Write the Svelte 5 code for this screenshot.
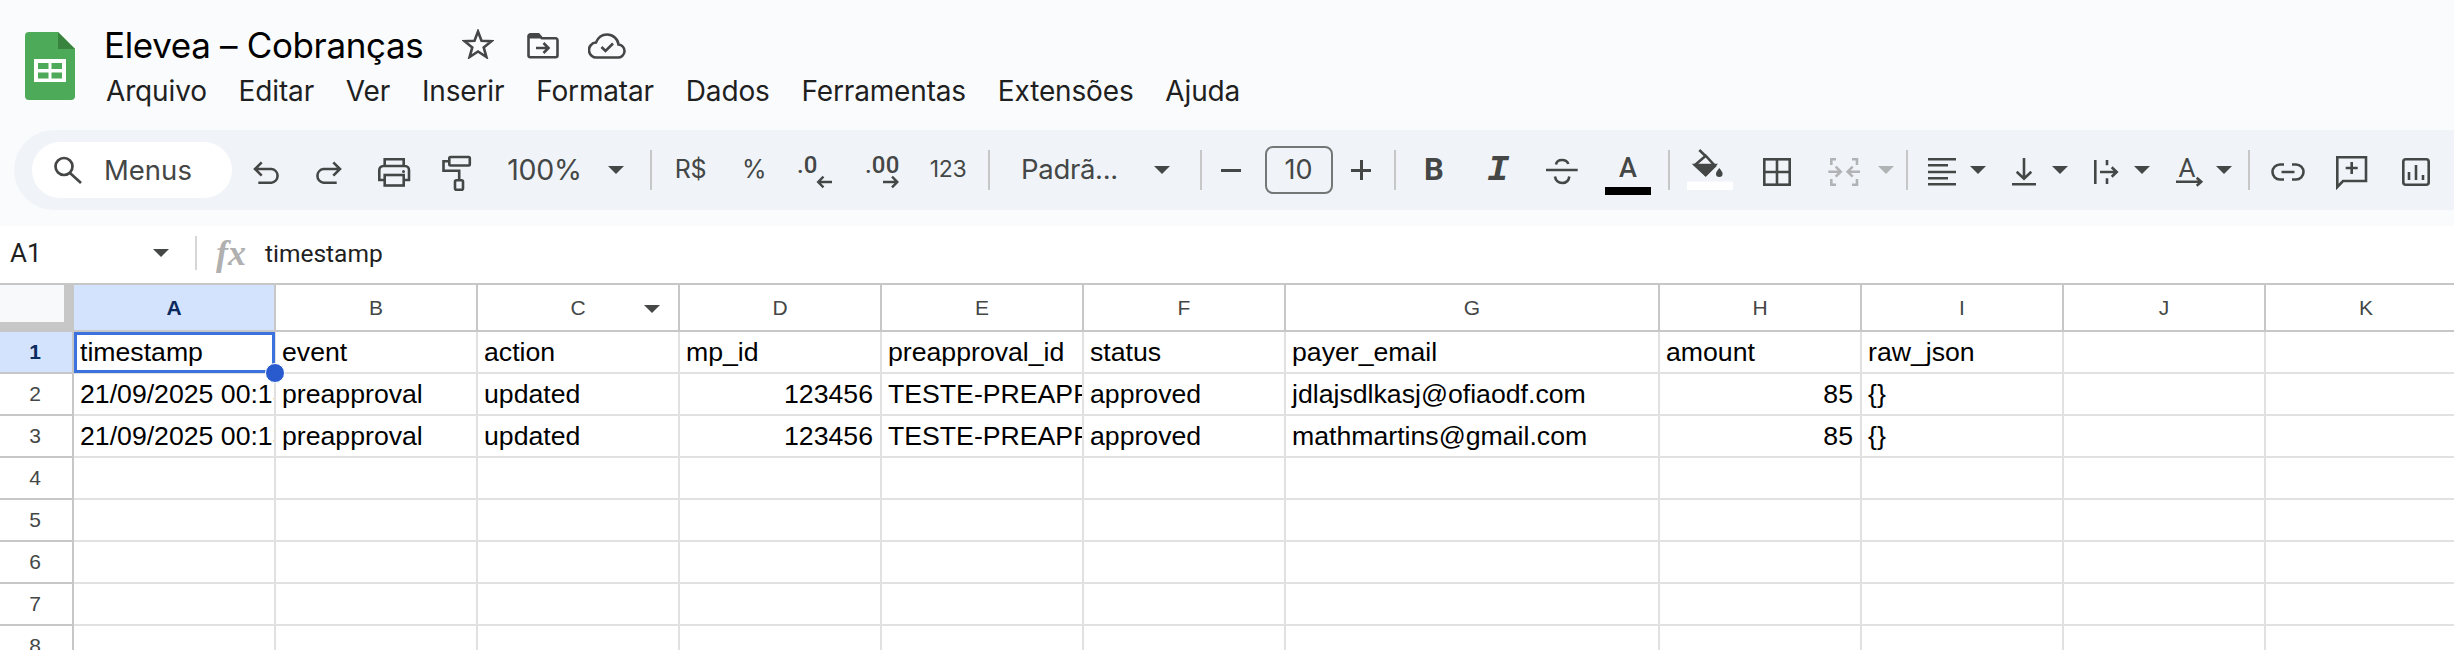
<script>
  const ic = {
    undo: `<path d="M15.7 12.3 9 19l6.7 6.7M9 19h16.5a6.9 6.9 0 0 1 0 13.7H12.3"/>`,
    redo: `<g transform="matrix(-1 0 0 1 40 0)"><path d="M15.7 12.3 9 19l6.7 6.7M9 19h16.5a6.9 6.9 0 0 1 0 13.7H12.3"/></g>`,
    print: `<path d="M10.7 15.5V9.3h19v6.2M10.7 30H5.3v-10a4 4 0 0 1 4-4h21.7a4 4 0 0 1 4 4v10h-5.300"/><rect x="10.7" y="25" width="19" height="10.500"/><circle cx="29.500" cy="21.500" r="1.500" fill="#444746" stroke="none"/>`,
    paint: `<rect x="13.300" y="7" width="20.500" height="8.500" rx="1.200"/><path d="M13.300 11.300H7.500v9.500h15.700V30"/><rect x="19" y="30.300" width="8" height="9.400" rx="1.500"/>`,
    dec: `<text x="-1" y="23" font-family="Roboto" font-weight="500" font-size="24" fill="#444746" stroke="none">.0</text><path d="M34 32H20.500M25.500 26.700 20.200 32l5.300 5.300" stroke-width="2.400"/>`,
    inc: `<text x="4" y="23" font-family="Roboto" font-weight="500" font-size="24" letter-spacing=".2" fill="#444746" stroke="none">.00</text><path d="M22 32h14M31 26.700 36.300 32 31 37.300" stroke-width="2.400"/>`,
    strike: `<path d="M4 20h31.700M14 14.500c.5-3 3-4.500 6-4.500s5.500 1.300 6.300 4M13 26.500c.5 4 3.500 6.500 7.300 6.500s6.500-2.500 7-6.500"/>`,
    fill: `<path d="M9.300 0l7 6.700M5 15 15.700 5.700 25 16 15.700 25Z"/><path d="M5 15h20L15.700 25Z" fill="#444746"/><path d="M29.300 18c2 2.700 3.300 4.300 3.300 5.700a3.300 3.300 0 0 1-6.600 0c0-1.400 1.300-3 3.300-5.700Z" fill="#444746" stroke="none"/><rect x="-3" y="31.700" width="46" height="8.300" fill="#fff" stroke="none"/>`,
    borders: `<rect x="7.300" y="9.300" width="25.400" height="25.400"/><path d="M20 9.300v25.400M7.300 22h25.400"/>`,
    merge: `<g stroke="#b1b3b4"><path d="M7.300 15V9.300H12M7.300 29v5.700H12M33 15V9.300h-5M33 29v5.700h-5M4.300 21.700h12.400M11.700 16.700l5 5-5 5M36 21.700H23.700M28.700 16.700l-5 5 5 5"/></g>`,
    align: `<path d="M6 9.300h28M6 15.300h20M6 22h28M6 28.300h20M6 34.300h28"/>`,
    valign: `<path d="M8 34.300h24M20 8v20.300M12.700 21.700 20 28.700l7.300-7"/>`,
    wrap: `<path d="M9.300 10v24M21 10v5.300M21 28.300V34M14 22h16.700M25.700 17.300 30.700 22l-5 4.700"/>`,
    rotate: `<text x="18" y="26.500" text-anchor="middle" font-family="Roboto" font-size="26" fill="#444746" stroke="none">A</text><path d="M7 31.700h25.700M27.700 27.700l4.500 4-4.500 4"/>`,
    link: `<path d="M16 14.500h-4a7.500 7.500 0 0 0 0 15h4M24 14.500h4a7.500 7.500 0 0 1 0 15h-4M13.500 22h13"/>`,
    comment: `<path d="M5.300 7.300H34V31H11l-5.700 6ZM19.700 12v12M13.700 18h12"/>`,
    chart: `<rect x="7.300" y="9.300" width="25.400" height="25.400" rx="2.500"/><path d="M13 22v8M20 15v15M27 25v5"/>`,
  };

  const items = [
    { c: 266, k: 'icon', n: 'undo' },
    { c: 329, k: 'icon', n: 'redo' },
    { c: 394, k: 'icon', n: 'print' },
    { c: 456, k: 'icon', n: 'paint' },
    { c: 544.5, k: 'text', t: '100%' },
    { c: 616, k: 'arrow' },
    { c: 651, k: 'sep' },
    { c: 690.5, k: 'text', t: 'R$', cls: 'mid' },
    { c: 754, k: 'text', t: '%', cls: 'mid' },
    { c: 818, k: 'icon', n: 'dec' },
    { c: 881, k: 'icon', n: 'inc' },
    { c: 948, k: 'text', t: '123', cls: 'small' },
    { c: 989, k: 'sep' },
    { c: 1069.5, k: 'text', t: 'Padrã...', cls: 'font' },
    { c: 1162, k: 'arrow' },
    { c: 1201, k: 'sep' },
    { c: 1233, k: 'minus' },
    { c: 1298.5, k: 'size', t: '10' },
    { c: 1361, k: 'plus' },
    { c: 1395, k: 'sep' },
    { c: 1434, k: 'bold', t: 'B' },
    { c: 1498, k: 'italic', t: 'I' },
    { c: 1562, k: 'icon', n: 'strike' },
    { c: 1628, k: 'color', t: 'A' },
    { c: 1669, k: 'sep' },
    { c: 1710, k: 'icon', n: 'fill' },
    { c: 1777, k: 'icon', n: 'borders' },
    { c: 1844, k: 'icon', n: 'merge' },
    { c: 1886, k: 'arrow', off: true },
    { c: 1907, k: 'sep' },
    { c: 1942, k: 'icon', n: 'align' },
    { c: 1978, k: 'arrow' },
    { c: 2024, k: 'icon', n: 'valign' },
    { c: 2060, k: 'arrow' },
    { c: 2106, k: 'icon', n: 'wrap' },
    { c: 2142, k: 'arrow' },
    { c: 2189, k: 'icon', n: 'rotate' },
    { c: 2224, k: 'arrow' },
    { c: 2249, k: 'sep' },
    { c: 2288, k: 'icon', n: 'link' },
    { c: 2352, k: 'icon', n: 'comment' },
    { c: 2416, k: 'icon', n: 'chart' },
  ];
  const widths = { icon: 48, text: 110, arrow: 16, sep: 2, minus: 24, plus: 24, size: 68, bold: 30, italic: 30, color: 46 };
  let edge = 232;
  const laid = items.map((it) => {
    const w = it.k === 'text' && it.cls && it.cls !== 'font' ? 60 : widths[it.k];
    const m = it.c - w / 2 - edge;
    edge = it.c + w / 2;
    return { ...it, w, m };
  });

  const menus = ['Arquivo', 'Editar', 'Ver', 'Inserir', 'Formatar', 'Dados', 'Ferramentas', 'Extensões', 'Ajuda'];
  const cols = ['A', 'B', 'C', 'D', 'E', 'F', 'G', 'H', 'I', 'J', 'K'];
  const rows = [
    ['timestamp', 'event', 'action', 'mp_id', 'preapproval_id', 'status', 'payer_email', 'amount', 'raw_json', '', ''],
    ['21/09/2025 00:13:24', 'preapproval', 'updated', '#123456', 'TESTE-PREAPPROVAL', 'approved', 'jdlajsdlkasj@ofiaodf.com', '#85', '{}', '', ''],
    ['21/09/2025 00:13:58', 'preapproval', 'updated', '#123456', 'TESTE-PREAPPROVAL', 'approved', 'mathmartins@gmail.com', '#85', '{}', '', ''],
    ...[4, 5, 6, 7, 8].map(() => Array(11).fill('')),
  ];
</script>

<div class="page">
  <header class="top">
    <svg class="logo" width="50" height="68" viewBox="0 0 50 68">
      <path d="M4 0H33L50 17V64a4 4 0 0 1-4 4H4a4 4 0 0 1-4-4V4a4 4 0 0 1 4-4Z" fill="#4caa58" />
      <path d="M33 0 50 17H33Z" fill="#38843e" />
      <path d="M9 27H41V50H9Z" fill="#fff" />
      <path d="M13 31H23.500V37H13ZM26.500 31H37V37H26.500ZM13 40.500H23.500V46.500H13ZM26.500 40.500H37V46.500H26.500Z" fill="#4caa58" />
    </svg>
    <div class="heads">
      <div class="titlerow">
        <span class="title">Elevea – Cobranças</span>
        <svg class="t1" width="32" height="30" viewBox="0 0 32 30" fill="none" stroke="#444746" stroke-width="2.600" stroke-linejoin="miter">
          <path d="M16 2.500 19.500 11.700l10 .5-7.800 6.200 2.700 9.600L16 22.500 7.600 28l2.700-9.600L2.500 12.200l10-.5Z" />
        </svg>
        <svg class="t2" width="32" height="26" viewBox="0 0 32 26" fill="none" stroke="#444746" stroke-width="2.600">
          <path d="M1.500 22.500V3.300a2 2 0 0 1 2-2h8l3.500 4H29a2 2 0 0 1 1.500 2v15a2 2 0 0 1-2 2h-25a2 2 0 0 1-2-2Z" />
          <path d="M1.500 1.500h9.800l3.500 4H1.500Z" fill="#444746" stroke="none" />
          <path d="M9 15h12M16.500 10l5 5-5 5" />
        </svg>
        <svg class="t3" width="38" height="26" viewBox="0 0 38 26" fill="none" stroke="#444746" stroke-width="2.600">
          <path d="M9 24.500a7.500 7.500 0 0 1-1-15C10 4.500 14 1.500 19 1.500c6 0 11 4.500 11.500 10a6.500 6.500 0 0 1-1 13Z" />
          <path d="M13.500 14l4 4 7.500-7.500" />
        </svg>
      </div>
      <nav class="menu">
        {#each menus as m}<span>{m}</span>{/each}
      </nav>
    </div>
  </header>

  <div class="toolbar">
    <div class="pill">
      <svg width="30" height="28" viewBox="0 0 30 28" fill="none" stroke="#444746" stroke-width="2.700">
        <circle cx="11" cy="10.500" r="8.500" /><path d="M17 17l11 10" />
      </svg>
      <span>Menus</span>
    </div>
    {#each laid as it}
      {#if it.k === 'icon'}
        <svg class="tb" style:margin-left="{it.m}px" width="48" height="48" viewBox="-4 -4 48 48" fill="none" stroke="#444746" stroke-width="2.600">{@html ic[it.n]}</svg>
      {:else if it.k === 'text'}
        <span class="tt {it.cls ?? ''}" style:margin-left="{it.m}px" style:width="{it.w}px">{it.t}</span>
      {:else if it.k === 'arrow'}
        <span class="arr" class:off={it.off} style:margin-left="{it.m}px"></span>
      {:else if it.k === 'sep'}
        <span class="sep" style:margin-left="{it.m}px"></span>
      {:else if it.k === 'minus'}
        <span class="minus" style:margin-left="{it.m}px"></span>
      {:else if it.k === 'plus'}
        <span class="plus" style:margin-left="{it.m}px"></span>
      {:else if it.k === 'size'}
        <span class="size" style:margin-left="{it.m}px">{it.t}</span>
      {:else if it.k === 'bold'}
        <span class="bold" style:margin-left="{it.m}px">{it.t}</span>
      {:else if it.k === 'italic'}
        <span class="italic" style:margin-left="{it.m}px">{it.t}</span>
      {:else if it.k === 'color'}
        <span class="color" style:margin-left="{it.m}px">{it.t}</span>
      {/if}
    {/each}
  </div>

  <div class="fbar">
    <span class="ref">A1</span>
    <span class="arr fa"></span>
    <span class="fsep"></span>
    <span class="fx">fx</span>
    <span class="fv">timestamp</span>
  </div>

  <div class="grid">
    <div class="corner"><div></div></div>
    {#each cols as c, i}
      <div class="ch" class:on={i === 0}>
        {c}
        {#if c === 'C'}<span class="arr cf"></span>{/if}
      </div>
    {/each}
    {#each rows as r, ri}
      <div class="rh" class:on={ri === 0}>{ri + 1}</div>
      {#each r as v, ci}
        <div class="cell" class:num={v.startsWith('#')}>
          {v.replace('#', '')}
          {#if ri === 0 && ci === 0}<span class="sel"></span><span class="handle"></span>{/if}
        </div>
      {/each}
    {/each}
  </div>
</div>

<style>
  :global(body) { margin: 0; background: #fff; }
  .page { width: 2454px; height: 650px; overflow: hidden; background: #f9fbfd; font-family: Roboto, sans-serif; color: #1f1f1f; }

  .top { display: flex; height: 130px; box-sizing: border-box; padding: 32px 0 0 25px; }
  .logo { flex: none; }
  .heads { margin-left: 30px; margin-top: -10px; }
  .titlerow { display: flex; align-items: center; height: 46px; }
  .title { margin-left: -1px; font-family: Inter, sans-serif; font-size: 35px; letter-spacing: -0.350px; color: #000; width: 343px; white-space: nowrap; }
  .t1 { margin-left: 15px; margin-top: -3px; }
  .t2 { margin-left: 33px; margin-top: 1px; }
  .t3 { margin-left: 29px; margin-top: 1px; }
  .menu { display: flex; gap: 31.800px; margin-top: 5px; padding-left: 1px; font-family: Inter, sans-serif; font-size: 28px; letter-spacing: -0.150px; line-height: 36px; color: #1f1f1f; }

  .toolbar { display: flex; align-items: center; height: 80px; margin-left: 14px; padding-left: 18px; background: #f0f4f9; border-radius: 40px 0 0 40px; }
  .pill { flex: none; box-sizing: border-box; display: flex; align-items: center; width: 200px; height: 56px; padding-left: 21px; gap: 21px; background: #fff; border-radius: 28px; font-family: Inter, sans-serif; font-size: 27.500px; color: #444746; }
  .tb { flex: none; overflow: visible; }
  .tt { flex: none; margin-top: -2px; text-align: center; font-family: Inter, sans-serif; font-size: 28.500px; letter-spacing: -0.300px; color: #444746; }
  .tt.font { font-size: 27.500px; }
  .tt.mid { font-size: 25px; letter-spacing: -0.300px; }
  .tt.small { font-size: 23px; letter-spacing: -0.400px; }
  .arr { flex: none; width: 0; height: 0; border-left: 8px solid transparent; border-right: 8px solid transparent; border-top: 8px solid #444746; }
  .arr.off { border-top-color: #b1b3b4; }
  .sep { flex: none; width: 2px; height: 40px; background: #c7c7c7; }
  .minus { flex: none; width: 20px; margin-right: 4px; height: 3px; background: #444746; }
  .plus { flex: none; position: relative; width: 24px; height: 24px; }
  .plus::before, .plus::after { content: ""; position: absolute; background: #444746; }
  .plus::before { left: 2px; right: 2px; top: 11px; height: 2.500px; }
  .plus::after { top: 2px; bottom: 2px; left: 11px; width: 2.500px; }
  .size { flex: none; box-sizing: border-box; width: 68px; height: 48px; border: 2px solid #747775; border-radius: 8px; text-align: center; line-height: 44px; font-family: Inter, sans-serif; font-size: 27px; color: #444746; }
  .bold { flex: none; width: 30px; text-align: center; font-family: Roboto, sans-serif; font-weight: 700; font-size: 31px; line-height: 48px; color: #444746; }
  .italic { flex: none; width: 30px; text-align: center; font-family: "Liberation Mono", monospace; font-weight: 700; font-style: italic; font-size: 37px; line-height: 48px; color: #444746; }
  .color { flex: none; box-sizing: border-box; width: 46px; height: 44px; margin-top: 6px; border-bottom: 8px solid #000; text-align: center; font-family: Roboto, sans-serif; font-weight: 500; font-size: 27px; line-height: 34px; color: #444746; }

  .fbar { display: flex; align-items: center; height: 57px; margin-top: 16px; padding-bottom: 3px; box-sizing: border-box; background: #fff; font-family: Roboto, sans-serif; }
  .ref { width: 153px; padding-left: 10px; box-sizing: border-box; font-size: 26px; color: #1f1f1f; }
  .fa { margin-right: 26px; }
  .fsep { width: 2px; height: 34px; background: #d4d6d8; }
  .fx { margin-left: 19px; width: 49px; font-family: "Liberation Serif", serif; font-style: italic; font-weight: 700; font-size: 36px; color: #b0b0b0; }
  .fv { font-size: 24.500px; color: #1f1f1f; }

  .grid { display: grid; grid-template-columns: 74px repeat(6, 202px) 374px repeat(4, 202px); grid-template-rows: 49px repeat(8, 42px); background: #fff; font-family: "Liberation Sans", sans-serif; }
  .grid > div { box-sizing: border-box; }
  .corner { background: #c7c7c7; border-top: 2px solid #c7c7c7; }
  .corner div { width: 64px; height: 37px; background: #f8f9fa; }
  .ch { position: relative; border-top: 2px solid #c7c7c7; border-right: 2px solid #c7c7c7; border-bottom: 2px solid #c7c7c7; display: flex; align-items: center; justify-content: center; font-size: 21px; color: #444746; }
  .ch.on { background: #d3e3fd; color: #0b2a5e; font-weight: 700; }
  .cf { position: absolute; right: 18px; top: 20px; }
  .rh { display: flex; align-items: center; justify-content: center; padding-right: 2px; border-right: 2px solid #c7c7c7; border-bottom: 2px solid #c7c7c7; font-size: 21px; color: #444746; }
  .rh.on { background: #d3e3fd; color: #0b2a5e; font-weight: 700; }
  .cell { position: relative; overflow: hidden; white-space: nowrap; padding: 0 7px 0 6px; border-right: 2px solid #e1e1e1; border-bottom: 2px solid #e1e1e1; font-size: 26.670px; line-height: 41px; color: #000; }
  .cell:has(.sel) { overflow: visible; z-index: 1; }
  .num { text-align: right; }
  .sel { position: absolute; left: 0; top: 0; right: -1px; bottom: -1px; border: 3px solid #3b72dd; box-sizing: border-box; }
  .handle { position: absolute; right: -11px; bottom: -11px; box-sizing: border-box; width: 20px; height: 20px; border-radius: 50%; border: 1.500px solid #fff; background: #2a5bce; }
</style>
